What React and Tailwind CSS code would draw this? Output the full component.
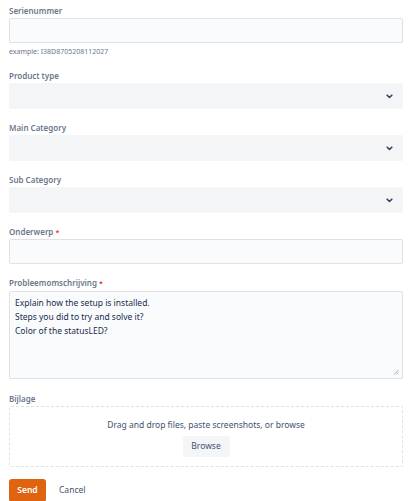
import React from 'react'

const Label = ({ children, required }) => (
  <div className='h-[12px] leading-[12px] text-[8px] font-semibold text-[#6b778c]'>
    {children}
    {required && <span className='text-[#de350b] ml-[2px] text-[7px]'>*</span>}
  </div>
)

const Chevron = () => (
  <svg width="7" height="5" viewBox="0 0 7 5" className='mr-[10px]'>
    <path d="M1.2 1.2 L3.5 3.5 L5.8 1.2" fill="none" stroke="#344563" strokeWidth="1.6" strokeLinecap="round" strokeLinejoin="round" />
  </svg>
)

const SelectBox = () => (
  <div className='mt-[1px] h-[26px] rounded-[2px] bg-[#f4f5f7] flex items-center justify-end'>
    <Chevron />
  </div>
)

const InputBox = () => (
  <div className='mt-[1px] h-[25px] rounded-[2px] bg-[#fafbfc] border border-[#dfe1e6]' />
)

export default function App() {
  return (
    <div className='bg-white w-[415px] h-[501px] overflow-hidden' style={{ fontFamily: '"Noto Sans", "Open Sans", sans-serif' }}>
      <div className='ml-[9px] w-[394px] pt-[5px]'>
        <Label>Serienummer</Label>
        <InputBox />
        <div className='mt-[4px] h-[10px] leading-[10px] text-[7px] text-[#6b778c]'>example: I38D8705208112027</div>

        <div className='mt-[13px]'>
          <Label>Product type</Label>
          <SelectBox />
        </div>

        <div className='mt-[13px]'>
          <Label>Main Category</Label>
          <SelectBox />
        </div>

        <div className='mt-[13px]'>
          <Label>Sub Category</Label>
          <SelectBox />
        </div>

        <div className='mt-[13px]'>
          <Label required>Onderwerp</Label>
          <InputBox />
        </div>

        <div className='mt-[13px]'>
          <Label required>Probleemomschrijving</Label>
          <div className='relative mt-[2px] h-[88px] rounded-[2px] bg-[#fafbfc] border border-[#dfe1e6] px-[5px] pt-[4px] text-[8.5px] leading-[14px] text-[#172b4d]'>
            <div>Explain how the setup is installed.</div>
            <div>Steps you did to try and solve it?</div>
            <div>Color of the statusLED?</div>
            <svg width="6" height="6" viewBox="0 0 6 6" className='absolute right-[3px] bottom-[3px]'>
              <path d="M5.5 1 L1 5.5 M5.5 3.5 L3.5 5.5" stroke="#8993a4" strokeWidth="0.8" />
            </svg>
          </div>
        </div>

        <div className='mt-[14px]'>
          <Label>Bijlage</Label>
          <div className='mt-[1px] h-[61px] rounded-[2px] border border-dashed border-[#dfe1e6] flex flex-col items-center pt-[12px]'>
            <div className='text-[8.5px] leading-[12px] text-[#42526e]'>Drag and drop files, paste screenshots, or browse</div>
            <button className='mt-[5px] h-[21px] w-[47px] rounded-[3px] bg-[#f4f5f7] text-[8.5px] text-[#42526e]'>Browse</button>
          </div>
        </div>

        <div className='mt-[12px] flex items-center'>
          <button className='h-[23px] w-[37px] rounded-[3px] bg-[#e0640f] text-white text-[8.5px] font-semibold'>Send</button>
          <button className='ml-[13px] text-[8.5px] text-[#42526e]'>Cancel</button>
        </div>
      </div>
    </div>
  )
}
